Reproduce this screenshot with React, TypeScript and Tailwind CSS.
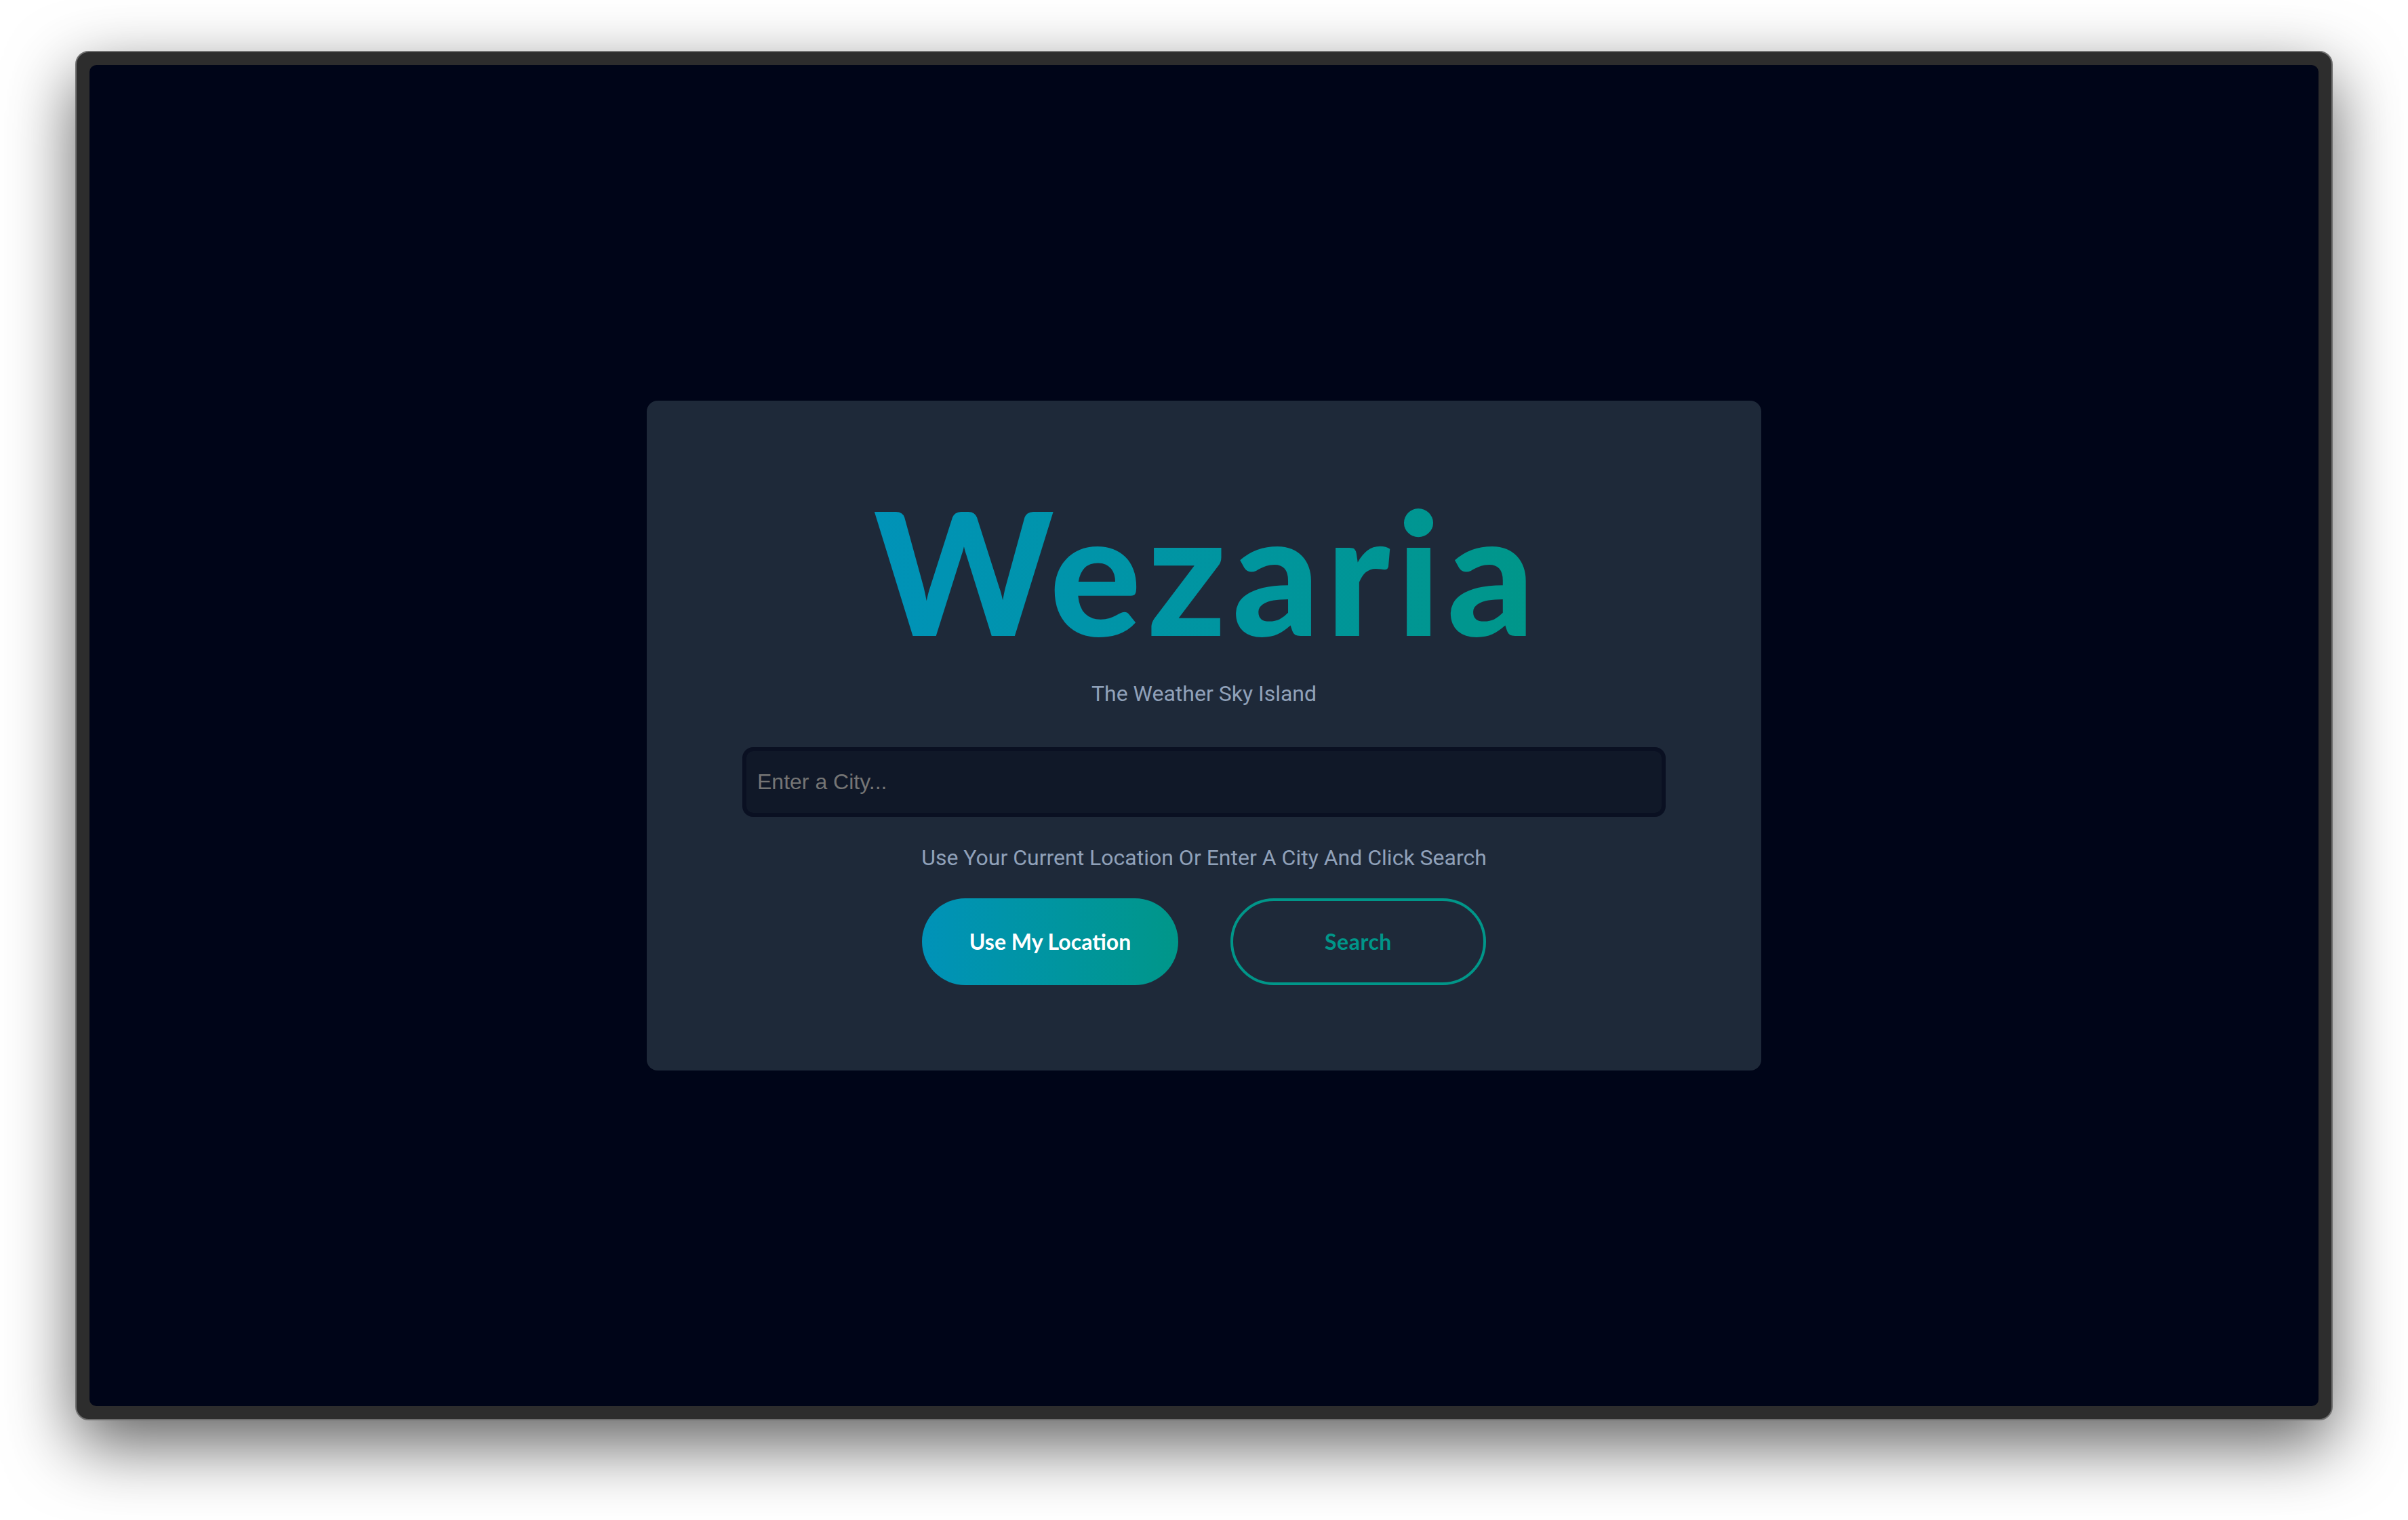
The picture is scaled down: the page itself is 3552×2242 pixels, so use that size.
export default function App() {
  return (
    <div className="w-[3552px] h-[2242px] bg-white pt-[75px] pl-[111px] font-['Roboto',sans-serif]">
      {/* window frame */}
      <div className="w-[3330px] h-[2020px] rounded-[20px] bg-[#2d2d2d] border-2 border-[#6f6f6f] p-[19px] shadow-[0_36px_100px_rgba(0,0,0,0.62)]">
        <div className="w-full h-full rounded-[10px] bg-[#000518] flex items-center justify-center">
          <div className="w-[1644px] h-[988px] rounded-2xl bg-[#1e2939] flex flex-col items-center pt-[100px]">
            <h1 className="pl-[9px] text-[252px] leading-[300px] font-black font-['Lato',sans-serif] tracking-[9px] text-transparent bg-clip-text bg-linear-to-r from-cyan-600 to-teal-600">
              Wezaria
            </h1>
            <p className="mt-[8px] text-[32px] leading-[48px] text-slate-400">The Weather Sky Island</p>
            <input
              placeholder="Enter a City..."
              className="mt-[55px] w-[1362px] h-[103px] rounded-2xl border-[6px] border-[#0a1022] bg-[#101828] px-[16px] text-[32px] font-['Liberation_Sans',sans-serif] text-slate-300 placeholder:text-[#757575] outline-none"
            />
            <p className="mt-[36px] text-[32px] leading-[48px] text-slate-400">
              Use Your Current Location Or Enter A City And Click Search
            </p>
            <div className="mt-[36px] flex gap-[77px]">
              <button className="w-[378px] h-[128px] rounded-full bg-linear-to-r from-cyan-600 to-teal-600 text-white text-[32px] font-bold font-['Lato',sans-serif]">
                Use My Location
              </button>
              <button className="w-[377px] h-[128px] rounded-full border-4 border-teal-600 text-teal-600 text-[32px] font-bold tracking-[0.5px] font-['Lato',sans-serif]">
                Search
              </button>
            </div>
          </div>
        </div>
      </div>
    </div>
  );
}
